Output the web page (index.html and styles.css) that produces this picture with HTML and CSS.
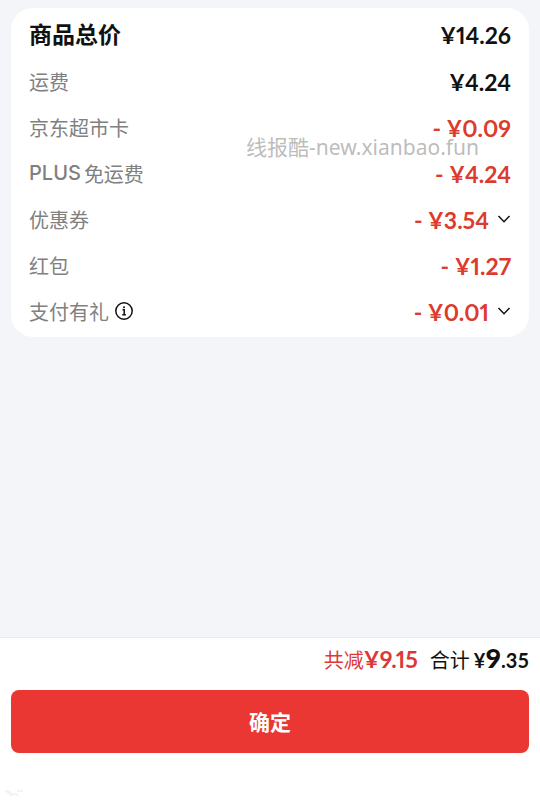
FILE: index.html
```html
<!DOCTYPE html>
<html lang="zh-CN">
  <head>
    <meta charset="UTF-8" />
    <meta name="viewport" content="width=device-width, initial-scale=1" />
    <title>价格明细</title>
    <link rel="stylesheet" href="styles.css">
  </head>
  <body>
    <main class="content">
      <dl class="card">
        <div class="row row-title">
          <dt>商品总价</dt>
          <dd class="price">¥14.26</dd>
        </div>
        <div class="row">
          <dt>运费</dt>
          <dd class="price">¥4.24</dd>
        </div>
        <div class="row">
          <dt>京东超市卡</dt>
          <dd class="price minus">- ¥0.09</dd>
        </div>
        <div class="row">
          <dt><span class="latin">PLUS</span>免运费</dt>
          <dd class="price minus">- ¥4.24</dd>
        </div>
        <div class="row">
          <dt>优惠券</dt>
          <dd class="price minus">
            - ¥3.54
            <button class="icon-btn" type="button" aria-label="展开优惠券">
              <svg width="14" height="14" viewBox="0 0 14 14"><path d="M1.500 3 7 8.700l5.500-5.700" /></svg>
            </button>
          </dd>
        </div>
        <div class="row">
          <dt>红包</dt>
          <dd class="price minus">- ¥1.27</dd>
        </div>
        <div class="row">
          <dt>
            支付有礼
            <button class="icon-btn" type="button" aria-label="支付有礼说明">
              <svg width="18" height="18" viewBox="0 0 18 18">
                <circle cx="9" cy="9" r="8.200" />
                <path d="M7.500 7.700H9.200V12.500M7.300 12.700h3.600" />
                <circle class="dot" cx="9" cy="5.200" r="1" />
              </svg>
            </button>
          </dt>
          <dd class="price minus">
            - ¥0.01
            <button class="icon-btn" type="button" aria-label="展开支付有礼">
              <svg width="14" height="14" viewBox="0 0 14 14"><path d="M1.500 3 7 8.700l5.500-5.700" /></svg>
            </button>
          </dd>
        </div>
      </dl>
      <div class="watermark">线报酷-new.xianbao.fun</div>
    </main>

    <footer class="footer">
      <div class="summary">
        <div class="saved">共减<span class="price">¥9.15</span></div>
        <div class="total">合计<span class="total-price">¥<b>9</b>.35</span></div>
      </div>
      <button class="confirm" type="button">确定</button>
      <svg class="corner-mark" width="20" height="8" viewBox="0 0 20 8"><path d="M1 2l5 1 1 3 4-1 3 1M13 2h6M3 4l5 1" /></svg>
    </footer>
  </body>
</html>
```

FILE: styles.css
```css
* {
  box-sizing: border-box;
}
body {
  display: flex;
  flex-direction: column;
  min-height: 100vh;
  margin: 0;
  background: #f4f5f9;
  color: #111;
  font-family: "Noto Sans CJK SC", sans-serif;
  font-size: 20px;
}
.content {
  position: relative;
  flex: 1;
  padding: 8px 11px;
}
.card {
  margin: 0;
  padding: 3px 18px 2px;
  background: #fff;
  border-radius: 22px;
}
.row {
  display: flex;
  align-items: center;
  justify-content: space-between;
  height: 46px;
}
.row dt {
  display: flex;
  align-items: center;
  gap: 6px;
  padding-bottom: 2px;
  color: #808080;
}
.row dd {
  display: flex;
  align-items: center;
  gap: 8px;
  margin: 0;
}
.row-title {
  height: 48px;
}
.row-title dt {
  padding-bottom: 4px;
  color: #111;
  font-size: 23px;
  font-weight: 700;
}
.latin {
  margin-right: -3px;
  font-family: Inter, sans-serif;
  font-weight: 500;
}
.price {
  font-family: Lato, sans-serif;
  font-size: 23px;
  font-weight: 700;
  font-variant-numeric: proportional-nums;
}
.minus {
  color: #dc3b2d;
}
.icon-btn {
  display: flex;
  padding: 0;
  border: 0;
  background: none;
  color: #111;
  cursor: pointer;
}
.icon-btn svg {
  fill: none;
  stroke: currentColor;
  stroke-width: 1.5;
}
.icon-btn .dot {
  fill: currentColor;
  stroke: none;
}
.watermark {
  position: absolute;
  top: 132px;
  left: 246px;
  color: rgba(150, 150, 150, 0.65);
  font-size: 21px;
  line-height: 30px;
  font-family: "Noto Sans", "Noto Sans CJK SC", sans-serif;
  white-space: nowrap;
  pointer-events: none;
}

.footer {
  position: relative;
  padding: 3px 11px 52px;
  background: #fff;
  border-top: 1px solid #e8eaeb;
}
.summary {
  display: flex;
  align-items: baseline;
  justify-content: flex-end;
  gap: 12px;
  height: 36px;
  margin-bottom: 13px;
}
.saved,
.total {
  display: flex;
  align-items: baseline;
}
.saved {
  color: #dc3838;
}
.total {
  gap: 4px;
}
.total-price {
  font-family: Lato, sans-serif;
  font-size: 20px;
  font-weight: 700;
}
.total-price b {
  font-size: 27px;
}
.confirm {
  display: block;
  width: 100%;
  height: 63px;
  border: 0;
  border-radius: 8px;
  padding: 0 0 2px;
  background: #ea3733;
  color: #fff;
  font-family: inherit;
  font-size: 21px;
  font-weight: 700;
  cursor: pointer;
}
.corner-mark {
  position: absolute;
  bottom: 8px;
  left: 4px;
  fill: none;
  stroke: #f3f3f3;
  stroke-width: 2;
}
```
